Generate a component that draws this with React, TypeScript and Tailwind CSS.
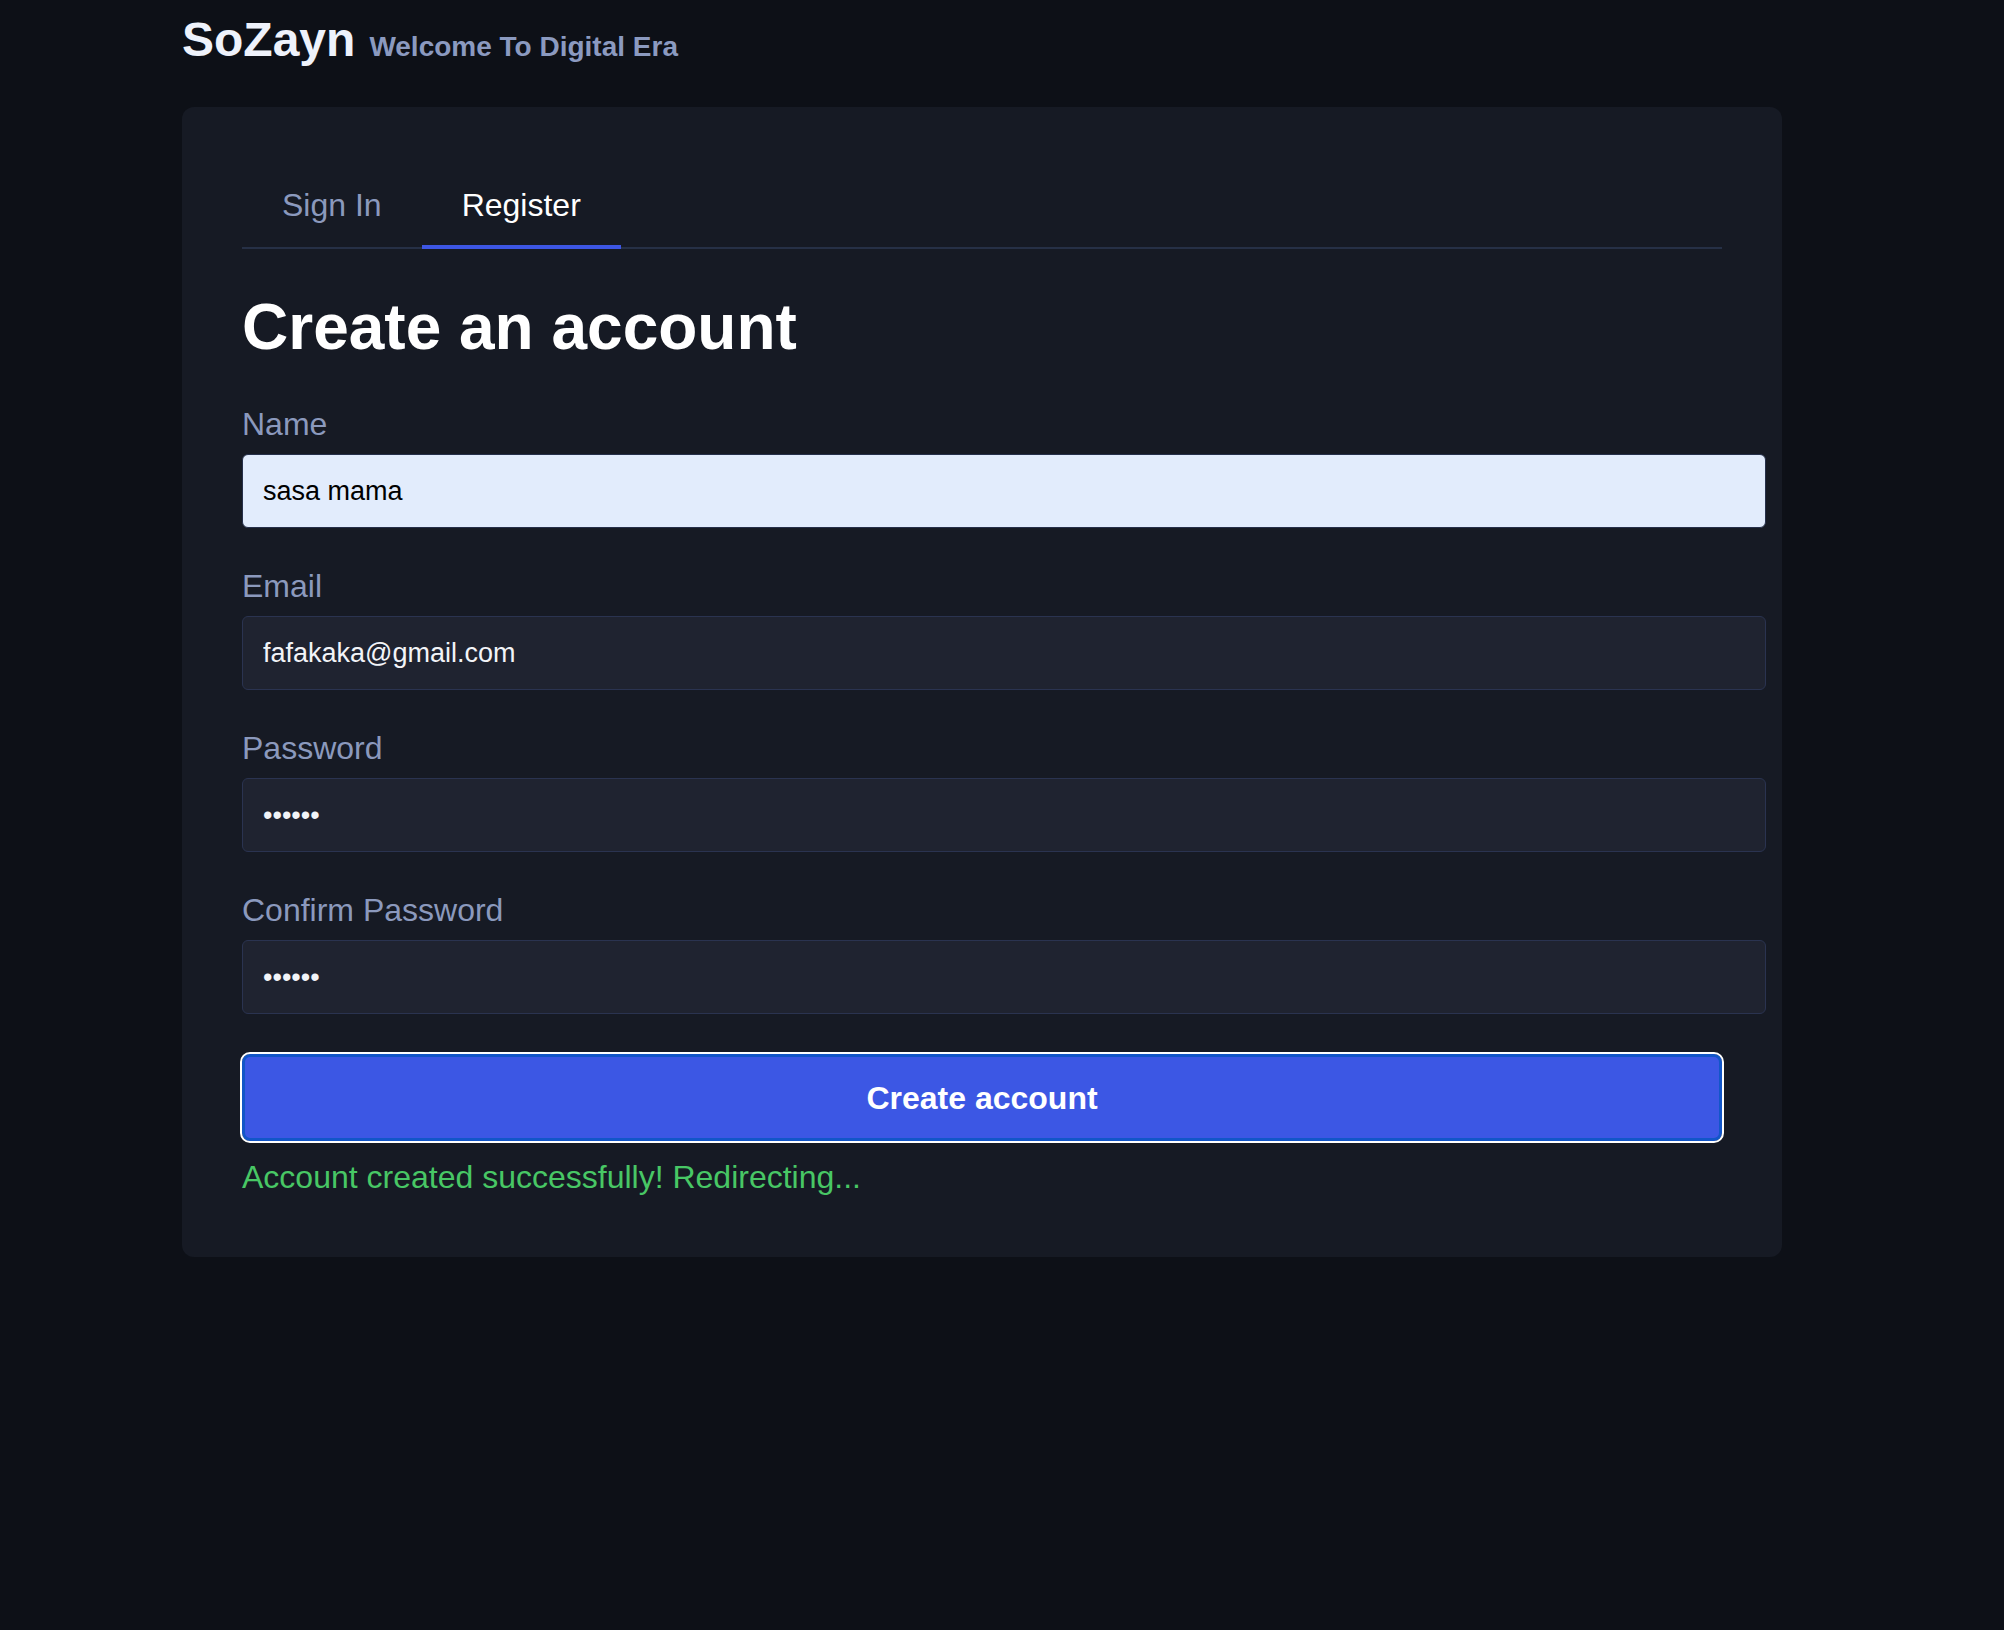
import { useState } from "react";

interface FieldProps {
  label: string;
  type?: string;
  value: string;
  autofilled?: boolean;
}

const Field = ({ label, type = "text", value, autofilled }: FieldProps) => {
  return (
    <div className="mb-[39px]">
      <label className="block text-[32px] leading-[38px] text-[#8b99bd] mb-[11px]">
        {label}
      </label>
      <input
        type={type}
        defaultValue={value}
        className={`box-content block w-full h-[72px] pl-[20px] pr-[22px] py-0 border rounded-md text-[27px] outline-none ${
          autofilled
            ? "bg-[#e2ecfc] text-black border-[#26304a]"
            : "bg-[#1f2330] text-[#f2f4f8] border-[#2a3350]"
        }`}
      />
    </div>
  );
};

const App = () => {
  const [tab, setTab] = useState("register");

  return (
    <div className="min-h-screen bg-[#0d1017] font-['Liberation_Sans',Arial,sans-serif]">
      <div className="ml-[182px] w-[1600px]">
        {/* Header */}
        <header className="h-[107px] pt-[16px] flex items-baseline gap-[14px]">
          <h1 className="text-[48px] leading-none font-bold text-[#eef2fb]">
            SoZayn
          </h1>
          <span className="text-[28px] leading-none font-bold text-[#8b9ac0]">
            Welcome To Digital Era
          </span>
        </header>

        {/* Card */}
        <div className="bg-[#161a24] rounded-xl pt-[57px] px-[60px] pb-[61px]">
          {/* Tabs */}
          <div className="flex border-b-2 border-[#263046]">
            <button
              onClick={() => setTab("signin")}
              className={`px-[40px] pt-[22px] pb-[21px] text-[32px] leading-[38px] border-b-4 -mb-[2px] ${
                tab === "signin"
                  ? "text-white border-[#3d56e4]"
                  : "text-[#8b99bd] border-transparent"
              }`}
            >
              Sign In
            </button>
            <button
              onClick={() => setTab("register")}
              className={`px-[40px] pt-[22px] pb-[21px] text-[32px] leading-[38px] border-b-4 -mb-[2px] ${
                tab === "register"
                  ? "text-white border-[#3d56e4]"
                  : "text-[#8b99bd] border-transparent"
              }`}
            >
              Register
            </button>
          </div>

          <h2 className="mt-[40px] mb-[39px] text-[64px] leading-[77px] font-bold text-white">
            Create an account
          </h2>

          <Field label="Name" value="sasa mama" autofilled />
          <Field label="Email" type="email" value="fafakaka@gmail.com" />
          <Field label="Password" type="password" value="123456" />
          <Field label="Confirm Password" type="password" value="123456" />

          <button className="mt-[1px] w-full h-[87px] rounded-lg bg-[#3c57e4] border-[3px] border-[#1256c8] outline-2 outline-white text-[32px] font-bold text-white">
            Create account
          </button>

          <p className="mt-[17px] text-[32px] leading-[38px] text-[#48c765]">
            Account created successfully! Redirecting...
          </p>
        </div>
      </div>
    </div>
  );
};

export default App;
